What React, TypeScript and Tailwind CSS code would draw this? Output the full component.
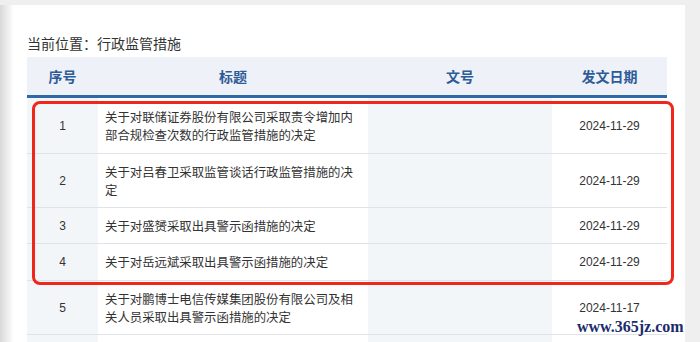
import React from "react";

const rows = [
  { n: "1", t: "关于对联储证券股份有限公司采取责令增加内部合规检查次数的行政监管措施的决定", d: "2024-11-29", h: "h-[56px]" },
  { n: "2", t: "关于对吕春卫采取监管谈话行政监管措施的决定", d: "2024-11-29", h: "h-[54px]" },
  { n: "3", t: "关于对盛赟采取出具警示函措施的决定", d: "2024-11-29", h: "h-[36px]" },
  { n: "4", t: "关于对岳远斌采取出具警示函措施的决定", d: "2024-11-29", h: "h-[37px]" },
  { n: "5", t: "关于对鹏博士电信传媒集团股份有限公司及相关人员采取出具警示函措施的决定", d: "2024-11-17", h: "h-[54px]" },
  { n: "", t: "", d: "", h: "h-[30px]" },
];

export default function App() {
  const cjk = { fontFamily: '"Noto Sans CJK SC", "Noto Sans", sans-serif' };
  return (
    <div className="relative w-[700px] h-[342px] overflow-hidden bg-[#efefef]" style={cjk}>
      <div className="flex h-full pt-[5px]">
        <div className="relative w-[685px] h-full bg-white">
          <div className="absolute left-0 top-0 h-full w-[14px] bg-gradient-to-r from-[#d9d9d9] to-white" />
          <div className="relative pl-[27px] pr-[18px]">
            <div className="h-[52px] pt-[28px] text-[14px] leading-[20px] text-[#333]">当前位置：行政监管措施</div>
            <div className="w-[640px]">
              <div className="flex h-[38px] items-center bg-[#eef2f8] text-[14px] font-bold text-[#2d5b97]">
                <div className="w-[71px] text-center">序号</div>
                <div className="w-[270px] text-center">标题</div>
                <div className="w-[184px] text-center">文号</div>
                <div className="w-[115px] text-center">发文日期</div>
              </div>
              <div className="h-[3px] bg-[#2c69a6]" />
              {rows.map((r, i) => (
                <div key={i} className={`flex ${r.h} border-b border-[#dfe2e6]`}>
                  <div className="w-[71px] flex items-center justify-center bg-[#f3f6f9] text-[12px] text-[#333]" style={{ fontFamily: '"Liberation Sans", Arial, sans-serif' }}>{r.n}</div>
                  <div className="w-[270px] flex items-center pl-[7px]">
                    <div className="w-[252px] text-[12.4px] leading-[18px] text-[#333]">{r.t}</div>
                  </div>
                  <div className="w-[184px] bg-[#f3f6f9]" />
                  <div className="w-[115px] flex items-center justify-center text-[12px] text-[#333]" style={{ fontFamily: '"Liberation Sans", Arial, sans-serif' }}>{r.d}</div>
                </div>
              ))}
            </div>
          </div>
        </div>
        <div className="flex-1 bg-[#efefef]" />
      </div>
      <div className="absolute left-[32px] top-[101px] w-[642px] h-[184px] rounded-[8px] border-[3.5px] border-[#f0261b]" />
      <div className="absolute left-[577px] top-[317px] text-[16px] font-bold leading-[20px] text-[#1c2c6b]" style={{ fontFamily: '"Liberation Serif", serif' }}>www.365jz.com</div>
    </div>
  );
}
